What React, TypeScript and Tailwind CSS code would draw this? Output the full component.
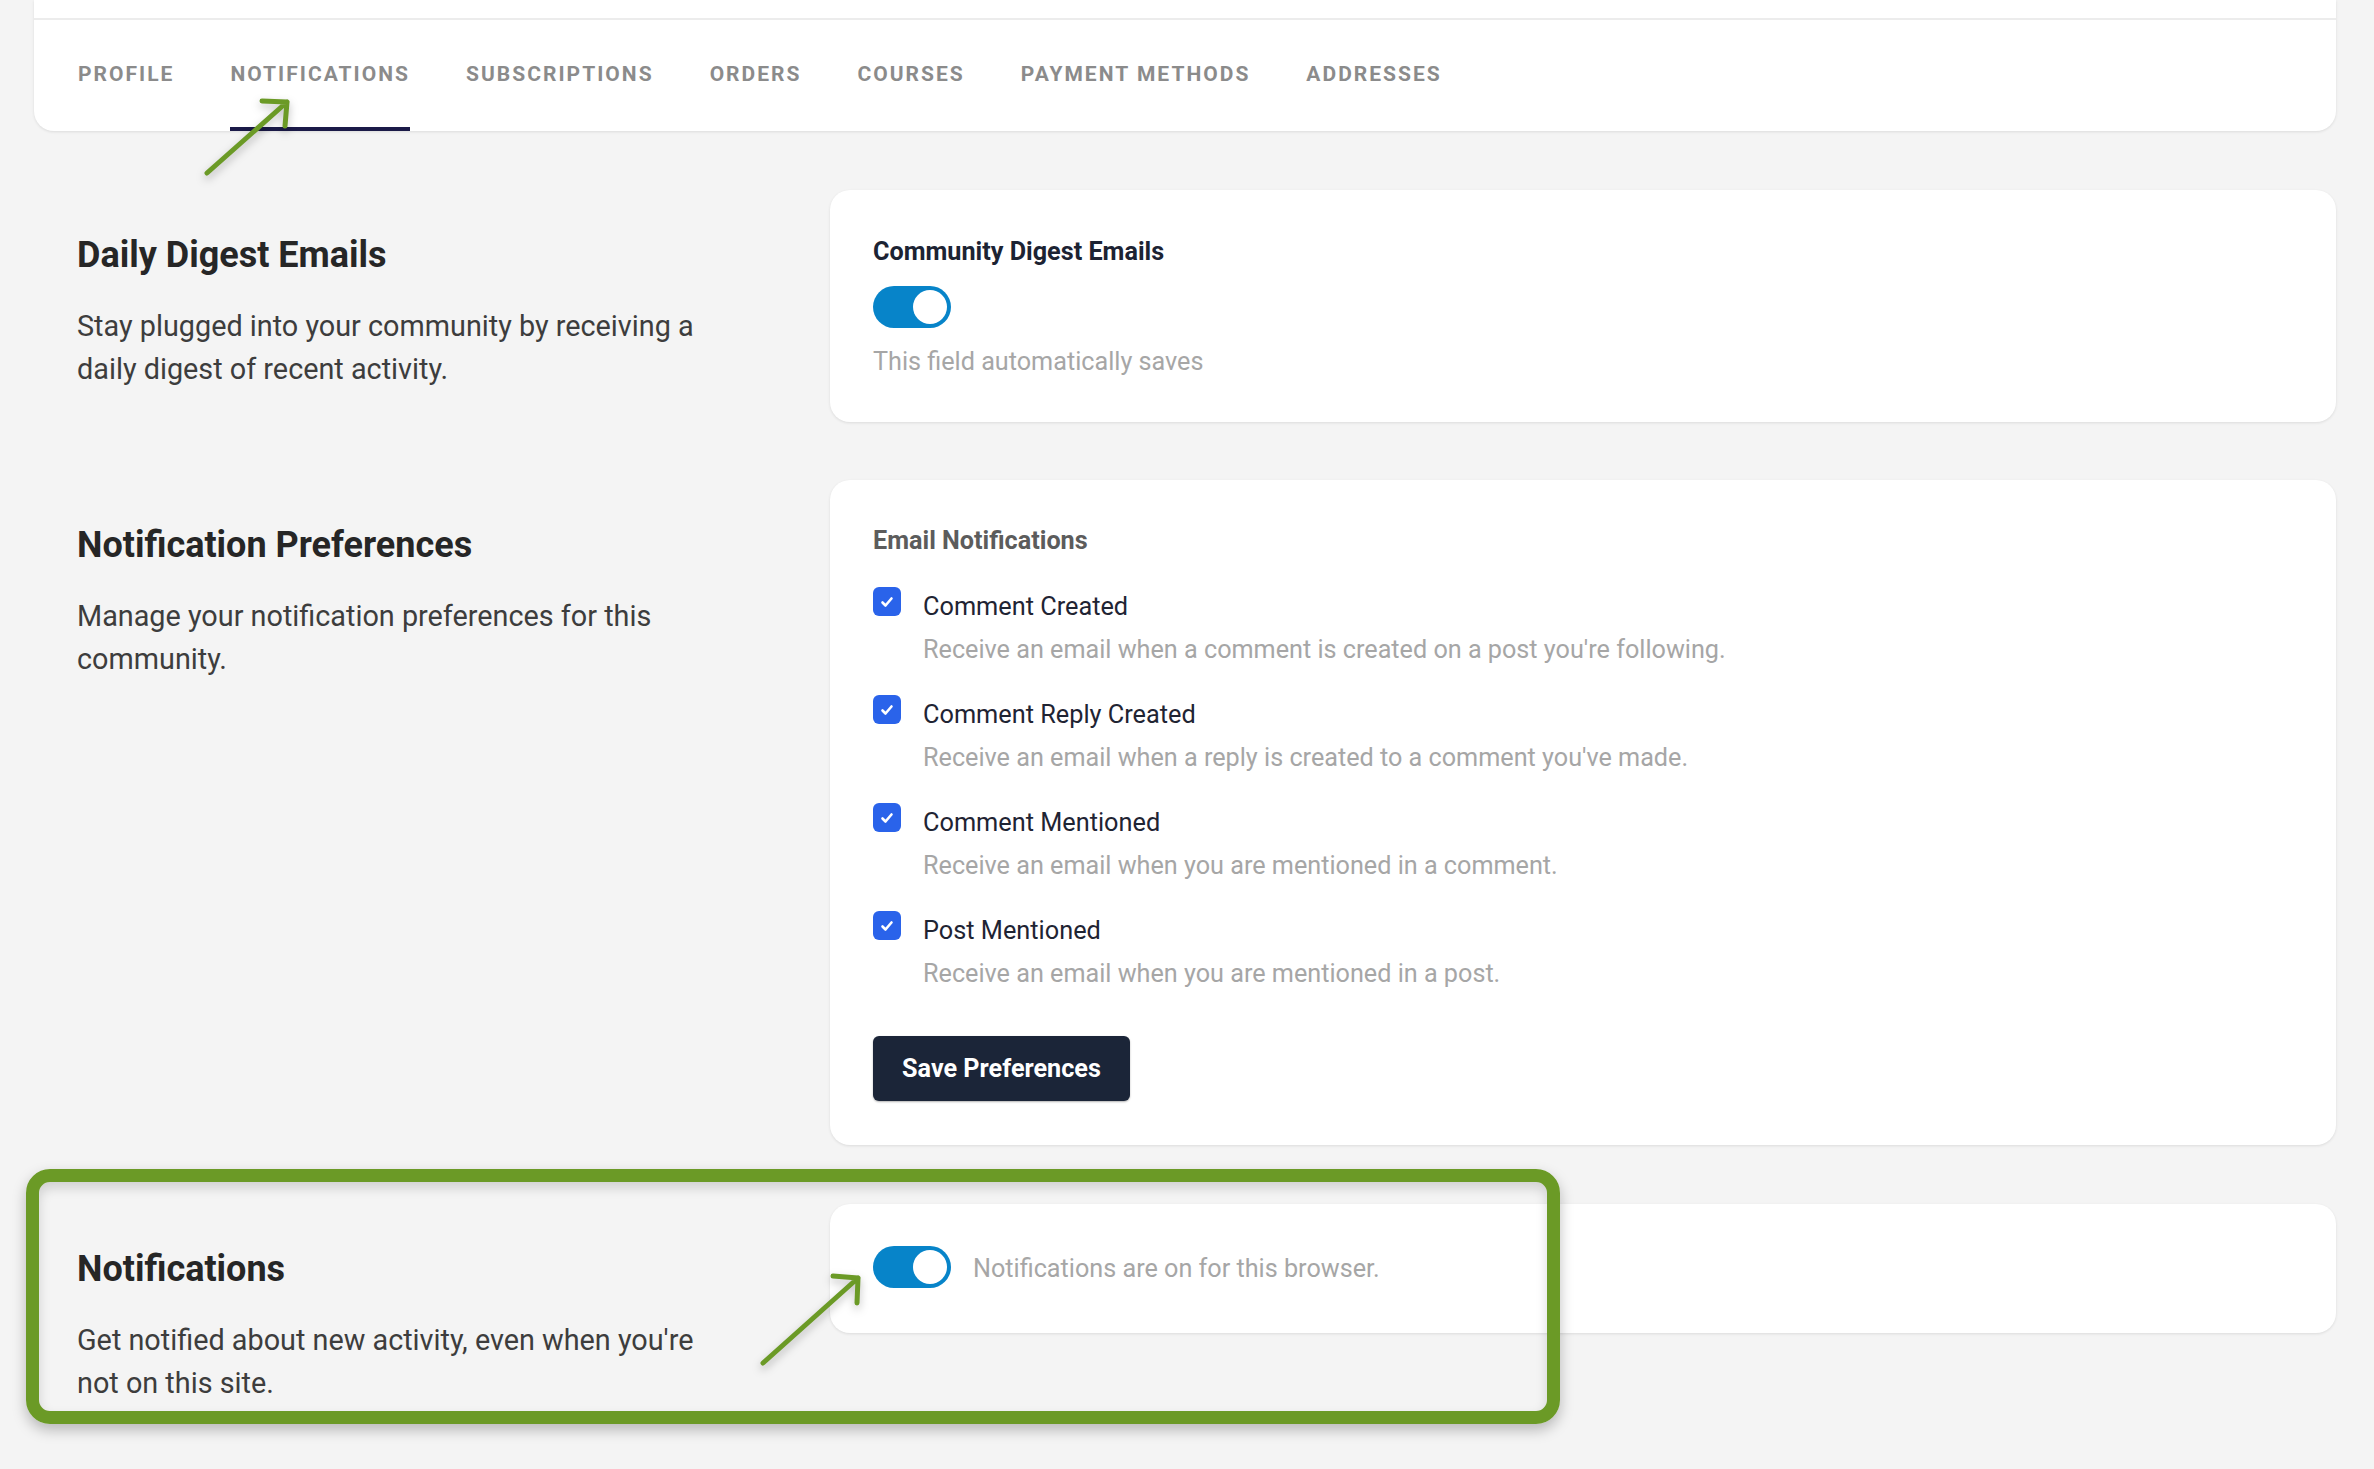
import React from "react";

const tabs = ["Profile", "Notifications", "Subscriptions", "Orders", "Courses", "Payment Methods", "Addresses"];

const emailPrefs = [
  { label: "Comment Created", desc: "Receive an email when a comment is created on a post you're following." },
  { label: "Comment Reply Created", desc: "Receive an email when a reply is created to a comment you've made." },
  { label: "Comment Mentioned", desc: "Receive an email when you are mentioned in a comment." },
  { label: "Post Mentioned", desc: "Receive an email when you are mentioned in a post." },
];

function Toggle() {
  return (
    <div className="w-[78px] h-[42px] shrink-0 rounded-full bg-[#0784c9] flex items-center justify-end p-[4px]">
      <div className="w-[34px] h-[34px] rounded-full bg-white" />
    </div>
  );
}

function Checkbox() {
  return (
    <div className="w-[28px] h-[29px] shrink-0 mt-[2px] rounded-[6px] bg-[#2a63ea] flex items-center justify-center">
      <svg width="16" height="16" viewBox="0 0 16 16" fill="none">
        <path d="M3.5 8.5l3 3 6-7" stroke="white" strokeWidth="2.6" strokeLinecap="round" strokeLinejoin="round" />
      </svg>
    </div>
  );
}

function SectionIntro({ title, text }: { title: string; text: string }) {
  return (
    <div className="w-[796px] shrink-0 pl-[43px] pt-[43px]">
      <h2 className="text-[36px] leading-[44px] font-bold text-[#262626]">{title}</h2>
      <p className="mt-[28px] max-w-[650px] text-[28.8px] leading-[43px] text-[#3d3d3d]">{text}</p>
    </div>
  );
}

function Arrow({ className, d }: { className: string; d: string }) {
  return (
    <svg className={`absolute drop-shadow-[0_4px_4px_rgba(0,0,0,0.25)] ${className}`} fill="none">
      <path d={d} stroke="#6b9a26" strokeWidth="5" strokeLinecap="round" strokeLinejoin="round" />
    </svg>
  );
}

export default function App() {
  return (
    <div className="relative min-h-screen bg-[#f4f4f4] pl-[34px] pr-[38px] pb-[60px] font-['Roboto',sans-serif]">
      {/* tabs card */}
      <div className="bg-white rounded-b-[20px] shadow-[0_1px_3px_rgba(0,0,0,0.1)]">
        <div className="h-[20px] border-b-2 border-[#ececec]" />
        <nav className="flex h-[111px] gap-[56px] pl-[44px]">
          {tabs.map((t) => (
            <div
              key={t}
              className={`flex items-center pt-[3px] uppercase text-[21px] font-bold tracking-[0.096em] text-[#8b8b8b] border-b-4 ${
                t === "Notifications" ? "border-[#1b1a48]" : "border-transparent"
              }`}
            >
              {t}
            </div>
          ))}
        </nav>
      </div>

      {/* daily digest */}
      <div className="flex mt-[59px]">
        <SectionIntro
          title="Daily Digest Emails"
          text="Stay plugged into your community by receiving a daily digest of recent activity."
        />
        <div className="flex-1 bg-white rounded-[20px] shadow-[0_1px_3px_rgba(0,0,0,0.1)] px-[43px] pt-[44px] pb-[43px]">
          <h3 className="text-[25.2px] leading-[35px] font-bold text-[#1c2333]">Community Digest Emails</h3>
          <div className="mt-[17px]">
            <Toggle />
          </div>
          <p className="mt-[16px] text-[25.2px] leading-[35px] text-[#a6a6a6]">This field automatically saves</p>
        </div>
      </div>

      {/* notification preferences */}
      <div className="flex mt-[58px]">
        <SectionIntro
          title="Notification Preferences"
          text="Manage your notification preferences for this community."
        />
        <div className="flex-1 bg-white rounded-[20px] shadow-[0_1px_3px_rgba(0,0,0,0.1)] px-[43px] pt-[43px] pb-[44px]">
          <h3 className="text-[25.2px] leading-[35px] font-bold text-[#5c5c5c]">Email Notifications</h3>
          <div className="mt-[27px] flex flex-col gap-[22px]">
            {emailPrefs.map((p) => (
              <label key={p.label} className="flex gap-[22px]">
                <Checkbox />
                <div>
                  <div className="text-[25.3px] leading-[43px] text-[#1f2433]">{p.label}</div>
                  <div className="text-[25.2px] leading-[43px] text-[#a6a6a6]">{p.desc}</div>
                </div>
              </label>
            ))}
          </div>
          <button className="mt-[41px] w-[257px] h-[65px] rounded-[6px] bg-[#1b2538] text-white text-[25.2px] font-bold shadow-[0_1px_2px_rgba(0,0,0,0.3)]">
            Save Preferences
          </button>
        </div>
      </div>

      {/* browser notifications */}
      <div className="flex mt-[59px]">
        <SectionIntro
          title="Notifications"
          text="Get notified about new activity, even when you're not on this site."
        />
        <div className="flex-1 self-start bg-white rounded-[20px] shadow-[0_1px_3px_rgba(0,0,0,0.1)] px-[43px] pt-[42px] pb-[45px] flex items-center gap-[22px]">
          <Toggle />
          <span className="pt-[2px] text-[25.2px] leading-[35px] text-[#a6a6a6]">Notifications are on for this browser.</span>
        </div>
      </div>

      {/* annotations */}
      <div className="absolute left-[26px] top-[1169px] w-[1534px] h-[255px] border-[13px] border-[#6b9a26] rounded-[24px] shadow-[0_6px_14px_rgba(0,0,0,0.25),inset_0_6px_12px_rgba(0,0,0,0.15)]" />
      <Arrow className="left-[200px] top-[95px] w-[100px] h-[90px]" d="M7 78 L87 7 M62 6 L87 7 L85 31" />
      <Arrow className="left-[755px] top-[1268px] w-[110px] h-[105px]" d="M8 95 L103 10 M78 8 L103 10 L102 35" />
    </div>
  );
}
